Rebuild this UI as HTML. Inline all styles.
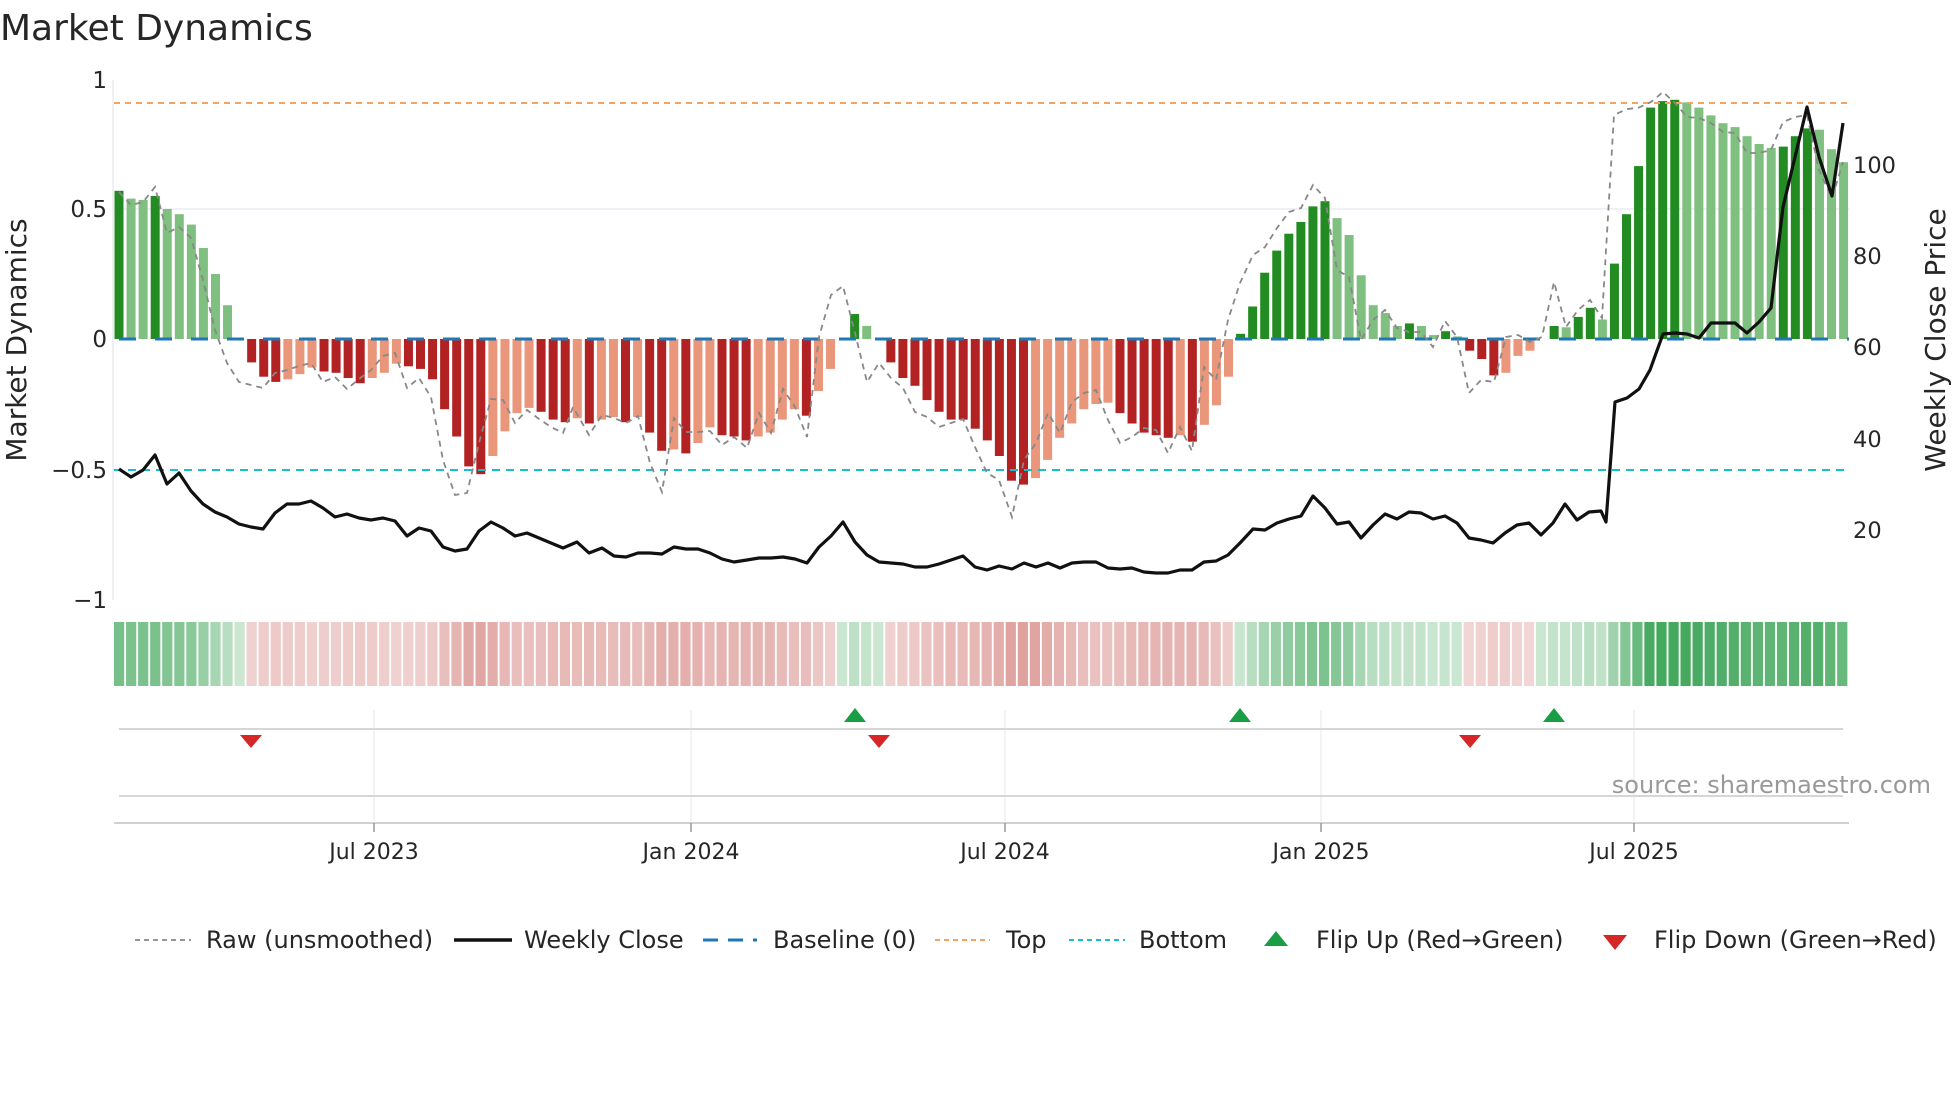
<!DOCTYPE html>
<html><head><meta charset="utf-8">
<style>
html,body{margin:0;padding:0;background:#fff;}
body{width:1960px;height:1102px;overflow:hidden;}
svg text{font-family:"DejaVu Sans","Liberation Sans",sans-serif;}
</style></head>
<body>
<svg id="s" width="1960" height="1102" xmlns="http://www.w3.org/2000/svg">
<text x="0" y="40" font-size="36" fill="#262626">Market Dynamics</text>
<line x1="113" y1="80" x2="113" y2="600" stroke="#e8ebf0" stroke-width="1.5"/>
<line x1="113" y1="209" x2="1849" y2="209" stroke="#eef1f5" stroke-width="2"/>
<g font-size="23" fill="#262626" text-anchor="end">
<text x="107" y="88">1</text>
<text x="107" y="217">0.5</text>
<text x="107" y="347">0</text>
<text x="107" y="478">−0.5</text>
<text x="107" y="608">−1</text>
</g>
<g font-size="22.5" fill="#262626">
<text x="1853" y="173">100</text>
<text x="1853" y="264">80</text>
<text x="1853" y="355">60</text>
<text x="1853" y="447">40</text>
<text x="1853" y="538">20</text>
</g>
<text transform="translate(26,340) rotate(-90)" font-size="28" fill="#262626" text-anchor="middle">Market Dynamics</text>
<text transform="translate(1945,340) rotate(-90)" font-size="28" fill="#262626" text-anchor="middle">Weekly Close Price</text>
<g id="bars"></g>
<line x1="114" y1="103" x2="1849" y2="103" stroke="#f4a460" stroke-width="2" stroke-dasharray="6 5"/>
<line x1="119" y1="339" x2="1849" y2="339" stroke="#1f77b4" stroke-width="3" stroke-dasharray="17 19"/>
<line x1="114" y1="470" x2="1849" y2="470" stroke="#17becf" stroke-width="2" stroke-dasharray="8 6"/>
<polyline id="raw" fill="none" stroke="#888" stroke-width="1.8" stroke-dasharray="6 5"/>
<polyline id="px" fill="none" stroke="#111" stroke-width="3.2" stroke-linejoin="round"/>
<g id="heat"></g>
<g stroke="#eceff3" stroke-width="1.5">
<line x1="374" y1="710" x2="374" y2="823"/><line x1="691" y1="710" x2="691" y2="823"/>
<line x1="1005" y1="710" x2="1005" y2="823"/><line x1="1321" y1="710" x2="1321" y2="823"/>
<line x1="1634" y1="710" x2="1634" y2="823"/>
</g>
<line x1="119" y1="729" x2="1843" y2="729" stroke="#d6d6d6" stroke-width="2"/>
<line x1="119" y1="796" x2="1843" y2="796" stroke="#d6d6d6" stroke-width="2"/>
<line x1="114" y1="823" x2="1849" y2="823" stroke="#d0d0d0" stroke-width="2"/>
<g stroke="#999" stroke-width="1.5">
<line x1="374" y1="823" x2="374" y2="832"/><line x1="691" y1="823" x2="691" y2="832"/>
<line x1="1005" y1="823" x2="1005" y2="832"/><line x1="1321" y1="823" x2="1321" y2="832"/>
<line x1="1634" y1="823" x2="1634" y2="832"/>
</g>
<g fill="#1a9e45">
<polygon points="855,708 866,722 844,722"/>
<polygon points="1240,708 1251,722 1229,722"/>
<polygon points="1554,708 1565,722 1543,722"/>
</g>
<g fill="#d62728">
<polygon points="240,735 262,735 251,748"/>
<polygon points="868,735 890,735 879,748"/>
<polygon points="1459,735 1481,735 1470,748"/>
</g>
<text x="1931" y="793" font-size="24" fill="#999" text-anchor="end">source: sharemaestro.com</text>
<g font-size="22" fill="#262626" text-anchor="middle">
<text x="374" y="859">Jul 2023</text><text x="691" y="859">Jan 2024</text>
<text x="1005" y="859">Jul 2024</text><text x="1321" y="859">Jan 2025</text>
<text x="1634" y="859">Jul 2025</text>
</g>
<g font-size="24" fill="#262626">
<line x1="135" y1="940" x2="191" y2="940" stroke="#888" stroke-width="1.8" stroke-dasharray="5 4"/>
<text x="206" y="948">Raw (unsmoothed)</text>
<line x1="454" y1="940" x2="512" y2="940" stroke="#111" stroke-width="3.5"/>
<text x="524" y="948">Weekly Close</text>
<line x1="703" y1="940" x2="757" y2="940" stroke="#1f77b4" stroke-width="3" stroke-dasharray="15 10"/>
<text x="773" y="948">Baseline (0)</text>
<line x1="935" y1="940" x2="990" y2="940" stroke="#f4a460" stroke-width="2" stroke-dasharray="5 4"/>
<text x="1006" y="948">Top</text>
<line x1="1069" y1="940" x2="1125" y2="940" stroke="#17becf" stroke-width="2" stroke-dasharray="5 4"/>
<text x="1139" y="948">Bottom</text>
<polygon points="1276,931 1288,946 1264,946" fill="#1a9e45"/>
<text x="1316" y="948">Flip Up (Red→Green)</text>
<polygon points="1603,935 1627,935 1615,950" fill="#d62728"/>
<text x="1654" y="948">Flip Down (Green→Red)</text>
</g>
</svg>
<script>
(function(){
var V=[.57,.54,.535,.55,.5,.48,.44,.35,.25,.13,0,-.09,-.145,-.165,-.155,-.135,-.11,-.125,-.13,-.15,-.17,-.15,-.13,-.095,-.105,-.115,-.155,-.27,-.375,-.49,-.52,-.45,-.355,-.285,-.265,-.28,-.31,-.32,
-.305,-.325,-.31,-.3,-.32,-.3,-.36,-.43,-.425,-.44,-.4,-.34,-.37,-.375,-.39,-.375,-.36,-.31,-.27,-.295,-.2,-.115,0,.096,.05,0,-.09,-.15,-.18,-.235,-.28,-.31,-.31,-.345,-.39,-.45,-.545,
-.56,-.535,-.465,-.38,-.325,-.27,-.25,-.245,-.285,-.325,-.36,-.37,-.38,-.37,-.395,-.33,-.255,-.145,.02,.125,.255,.34,.405,.45,.51,.53,.465,.4,.245,.13,.1,.05,.06,.05,.015,.03,.01,-.045,
-.077,-.14,-.13,-.065,-.045,0,.05,.045,.085,.12,.075,.29,.48,.665,.89,.915,.92,.91,.89,.86,.83,.815,.78,.75,.735,.74,.78,.81,.805,.73,.68];
var D="1001000000"+"0111000111"+"1000111111"+"10000111"+"010010110100"+"1110000100"+"0100"+"111111111111"+"0000000"+"1111101000"+"11111111"+"00000010010"+"111000010110"+"111111"+"00000000111000";
var ns="http://www.w3.org/2000/svg",b=document.getElementById('bars'),h=document.getElementById('heat');
function mk(p,a){var e=document.createElementNS(ns,'rect');for(var k in a)e.setAttribute(k,a[k]);p.appendChild(e);}
function lerp(c,t){return 'rgb('+c.map(function(x){return Math.round(255+(x-255)*t)}).join(',')+')';}
for(var i=0;i<V.length;i++){var v=V[i],cx=119+i*12.06,dk=D[i]=='1';
 if(v!=0){var yy=339-260*v,ty=Math.min(yy,339),hh=Math.abs(339-yy);
  var col=v>0?(dk?'#228b22':'#7fbf7f'):(dk?'#b22222':'#e9967a');
  mk(b,{x:cx-4.5,y:ty,width:9,height:hh,fill:col});}
 var t=0.25+0.7*Math.abs(v);
 var hc=v>=0?lerp([46,158,74],t):lerp([205,110,105],t);
 mk(h,{x:114+i*12.05,y:622,width:10.2,height:64,fill:hc});}
var P="119,469 131,477 143,470 155,455 167,484 179,473 191,491 203,504 215,512 227,517 239,524 251,527 263,529 275,513 287,504 299,504 311,501 323,508 335,517 347,514 359,518 371,520 383,518 395,521 407,536 419,528 431,531 443,547 455,551 467,549 479,531 491,522 503,528 515,536 527,533 539,538 551,543 563,548 577,542 589,553 602,548 614,556 626,557 638,553 650,553 662,554 674,547 686,549 698,549 710,553 722,559 734,562 747,560 759,558 771,558 783,557 795,559 807,563 819,547 831,536 843,522 855,542 867,555 879,562 891,563 903,564 915,567 927,567 939,564 951,560 963,556 975,567 987,570 999,566 1012,569 1024,563 1036,567 1048,563 1060,568 1072,563 1084,562 1096,562 1108,568 1120,569 1132,568 1144,572 1156,573 1168,573 1180,570 1192,570 1204,562 1216,561 1228,555 1240,543 1253,529 1265,530 1277,523 1289,519 1301,516 1313,496 1325,508 1337,524 1349,522 1361,538 1373,525 1385,514 1397,519 1409,512 1421,513 1433,519 1445,516 1457,523 1469,538 1481,540 1493,543 1505,533 1517,525 1529,523 1541,535 1553,523 1565,504 1577,520 1589,512 1601,511 1606,522 1615,402 1627,398 1639,389 1650,370 1663,334 1675,333 1687,334 1699,338 1711,323 1723,323 1735,323 1747,333 1759,322 1771,308 1783,207 1795,157 1807,107 1819,157 1832,196 1843,123";
document.getElementById('px').setAttribute('points',P);
var R="119,192 131,205 143,202 155,187 167,233 179,227 191,238 203,280 215,330 227,363 239,382 251,385 263,388 275,373 287,370 299,366 311,363 323,382 335,377 347,389 359,379 371,370 383,356 395,353 407,388 419,378 431,397 443,460 455,495 467,493 479,443 491,399 503,400 515,423 527,410 539,419 551,427 563,433 573,407 589,435 602,415 614,418 626,423 638,416 650,463 662,492 674,418 686,432 698,432 710,431 722,445 734,437 747,448 759,413 771,433 783,389 795,407 807,437 819,337 831,295 843,286 855,333 867,382 879,363 891,378 903,388 915,412 927,417 939,427 951,423 963,419 975,447 987,473 999,480 1012,517 1024,460 1036,443 1048,413 1060,433 1072,402 1084,393 1096,390 1108,420 1120,443 1132,437 1144,428 1156,430 1168,453 1180,427 1192,451 1204,367 1216,380 1228,320 1240,283 1253,255 1265,247 1277,228 1289,212 1301,208 1313,185 1325,198 1337,270 1349,277 1361,340 1373,320 1385,310 1397,328 1409,332 1421,332 1433,347 1445,321 1457,337 1469,393 1481,380 1494,382 1506,337 1518,335 1530,342 1542,337 1554,282 1566,327 1578,310 1590,300 1602,318 1614,115 1627,109 1638,108 1651,102 1663,92 1675,103 1687,117 1699,118 1711,123 1723,132 1735,133 1747,153 1759,153 1771,150 1783,122 1795,117 1807,115 1819,170 1832,198 1843,162";
document.getElementById('raw').setAttribute('points',R);
})();
</script>
</body></html>
